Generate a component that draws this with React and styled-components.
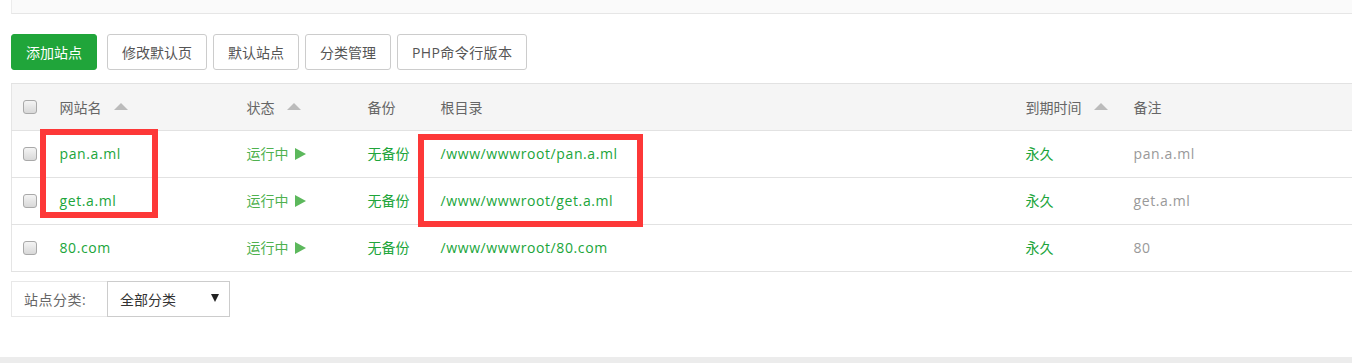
import React from "react";
import styled, { createGlobalStyle } from "styled-components";

const Global = createGlobalStyle`
  html, body { margin: 0; padding: 0; background: #ececec; }
  body {
    font-family: "Open Sans", "Noto Sans CJK SC", sans-serif;
    font-size: 14px;
    color: #333;
  }
  * { box-sizing: border-box; }
`;

const Page = styled.div`
  position: relative;
  height: 357px;
  background: #fff;
  box-shadow: 0 1px 3px rgba(0, 0, 0, 0.12);
  padding-left: 11px;
  overflow: hidden;
`;

const TopStrip = styled.div`
  height: 14px;
  background: #fafafa;
  border-left: 1px solid #ececec;
  border-bottom: 1px solid #e6e6e6;
`;

const Toolbar = styled.div`
  display: flex;
  align-items: center;
  gap: 6px;
  margin-top: 20px;
  height: 36px;
`;

const Button = styled.button`
  height: 36px;
  padding: 0 14px;
  font-family: "Open Sans", "Noto Sans CJK SC", sans-serif;
  font-size: 14px;
  border-radius: 3px;
  cursor: pointer;
  border: 1px solid ${(p) => (p.$primary ? "#20a53a" : "#ccc")};
  background: ${(p) => (p.$primary ? "#20a53a" : "#fff")};
  color: ${(p) => (p.$primary ? "#fff" : "#555")};
  margin-right: ${(p) => (p.$primary ? "4px" : "0")};
  letter-spacing: ${(p) => (p.$latin ? "0.4px" : "0")};
`;

const Table = styled.table`
  margin-top: 13px;
  width: 100%;
  border-collapse: collapse;
  table-layout: fixed;
  border-left: 1px solid #e5e5e5;
`;

const HeadRow = styled.tr`
  background: #f5f5f5;
  height: 47px;
  border-top: 1px solid #e2e2e2;
  border-bottom: 1px solid #e2e2e2;
`;

const Row = styled.tr`
  height: 47px;
  border-bottom: 1px solid #e2e2e2;
`;

const Th = styled.th`
  text-align: left;
  font-weight: normal;
  color: #666;
  padding: 0 0 0 12px;
  white-space: nowrap;
`;

const Td = styled.td`
  padding: 0 0 2px 12px;
  white-space: nowrap;
  color: ${(p) => p.$color || "#20a53a"};
  letter-spacing: ${(p) => (p.$latin ? "0.6px" : "0")};
`;

const CheckCell = styled.td`
  padding: 0 0 0 11px;
`;

const CheckHead = styled.th`
  padding: 0 0 0 11px;
  text-align: left;
`;

const Check = styled.span`
  display: block;
  width: 14px;
  height: 14px;
  border: 1px solid #a9a9a9;
  border-radius: 3px;
  background: linear-gradient(#f4f4f4, #d8d8d8);
`;

const SortArrow = styled.span`
  display: inline-block;
  margin-left: 12px;
  width: 0;
  height: 0;
  border-left: 7px solid transparent;
  border-right: 7px solid transparent;
  border-bottom: 7px solid #bbb;
  vertical-align: 3px;
`;

const Play = styled.span`
  display: inline-block;
  margin-left: 6px;
  width: 0;
  height: 0;
  border-top: 6px solid transparent;
  border-bottom: 6px solid transparent;
  border-left: 11px solid #5cb85c;
  vertical-align: -1px;
`;

const FilterGroup = styled.div`
  display: flex;
  margin-top: 9px;
  height: 36px;
  width: 219px;
`;

const FilterLabel = styled.div`
  display: flex;
  align-items: center;
  padding-left: 12px;
  width: 96px;
  border: 1px solid #e8e8e8;
  border-right: none;
  color: #666;
  letter-spacing: 0.5px;
`;

const Select = styled.div`
  flex: 1;
  display: flex;
  align-items: center;
  justify-content: space-between;
  padding: 0 10px 0 12px;
  border: 1px solid #ccc;
  color: #333;
`;

const Caret = styled.span`
  width: 0;
  height: 0;
  border-left: 4px solid transparent;
  border-right: 4px solid transparent;
  border-top: 8px solid #222;
  margin-top: -2px;
`;

const Mark = styled.div`
  position: absolute;
  border: 6px solid #fd3838;
  pointer-events: none;
`;

const sites = [
  { name: "pan.a.ml", path: "/www/wwwroot/pan.a.ml", note: "pan.a.ml" },
  { name: "get.a.ml", path: "/www/wwwroot/get.a.ml", note: "get.a.ml" },
  { name: "80.com", path: "/www/wwwroot/80.com", note: "80" },
];

export default function App() {
  return (
    <>
      <Global />
      <Page>
        <TopStrip />
        <Toolbar>
          <Button $primary>添加站点</Button>
          <Button>修改默认页</Button>
          <Button>默认站点</Button>
          <Button>分类管理</Button>
          <Button $latin>PHP命令行版本</Button>
        </Toolbar>
        <Table>
          <colgroup>
            <col style={{ width: 36 }} />
            <col style={{ width: 187 }} />
            <col style={{ width: 121 }} />
            <col style={{ width: 73 }} />
            <col style={{ width: 585 }} />
            <col style={{ width: 108 }} />
            <col />
          </colgroup>
          <thead>
            <HeadRow>
              <CheckHead><Check /></CheckHead>
              <Th>网站名<SortArrow /></Th>
              <Th>状态<SortArrow /></Th>
              <Th>备份</Th>
              <Th>根目录</Th>
              <Th>到期时间<SortArrow /></Th>
              <Th>备注</Th>
            </HeadRow>
          </thead>
          <tbody>
            {sites.map((s) => (
              <Row key={s.name}>
                <CheckCell><Check /></CheckCell>
                <Td $latin>{s.name}</Td>
                <Td $color="#4fb14f">运行中<Play /></Td>
                <Td>无备份</Td>
                <Td $latin>{s.path}</Td>
                <Td>永久</Td>
                <Td $latin $color="#999">{s.note}</Td>
              </Row>
            ))}
          </tbody>
        </Table>
        <FilterGroup>
          <FilterLabel>站点分类:</FilterLabel>
          <Select>
            全部分类
            <Caret />
          </Select>
        </FilterGroup>
        <Mark style={{ left: 40, top: 129, width: 118, height: 89 }} />
        <Mark style={{ left: 418, top: 134, width: 225, height: 93 }} />
      </Page>
    </>
  );
}
